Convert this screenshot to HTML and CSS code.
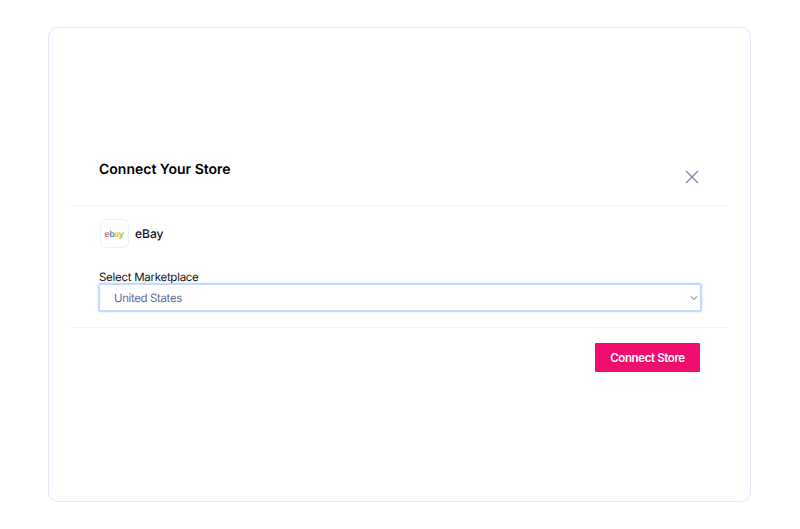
FILE: index.html
```html
<!DOCTYPE html>
<html lang="en">
<head>
    <meta charset="UTF-8">
    <meta name="viewport" content="width=device-width, initial-scale=1.0">
    <title>Connect Your Store</title>

    <link rel="stylesheet" href="styles.css">
</head>
<body>

    <div class="card">
        <div class="modal">
            <div class="modal-header">
                <h2>Connect Your Store</h2>
                <svg class="close" width="14" height="14" viewBox="0 0 14 14">
                    <path d="M1 1L13 13M13 1L1 13" stroke="#7d86a6" stroke-width="1.2" fill="none" />
                </svg>
            </div>

            <div class="modal-body">
                <div class="store">
                    <div class="logo"><span class="e">e</span><span class="b">b</span><span class="a">a</span><span class="y">y</span></div>
                    <div class="store-name">eBay</div>
                </div>

                <label>Select Marketplace</label>
                <div class="select">
                    <span>United States</span>
                    <svg width="8" height="6" viewBox="0 0 8 6">
                        <path d="M1 1.5L4 4.5L7 1.5" stroke="#9aa1b8" stroke-width="1.1" fill="none" />
                    </svg>
                </div>
            </div>

            <div class="modal-footer">
                <button>Connect Store</button>
            </div>
        </div>
    </div>

</body>
</html>
```

FILE: styles.css
```css
* {
    margin: 0;
    padding: 0;
    box-sizing: border-box;
}

body {
    height: 529px;
    padding: 27px 49px 27px 48px;
    background: #fff;
    font-family: Inter, "Liberation Sans", sans-serif;
    text-rendering: geometricPrecision;
    overflow: hidden;
}

.card {
    height: 475px;
    padding: 0 22px;
    border: 1px solid #e6e8f8;
    border-radius: 10px;
    display: flex;
    flex-direction: column;
    justify-content: center;
}

.modal-header {
    height: 49px;
    padding: 4px 29px 0 28px;
    border-bottom: 1px solid #f2f3f9;
    display: flex;
    justify-content: space-between;
}

h2 {
    font-size: 14px;
    font-weight: 600;
    line-height: 18px;
    color: #000;
}

.close {
    margin-top: 9px;
}

.modal-body {
    padding: 13px 26px 15px 27px;
    border-bottom: 1px solid #f2f3f9;
}

.store {
    display: flex;
    align-items: center;
    gap: 6px;
    margin-bottom: 21px;
    margin-left: 2px;
}

.logo {
    width: 29px;
    height: 29px;
    padding-right: 1px;
    border: 1px solid #eff0f8;
    border-radius: 6px;
    display: flex;
    align-items: center;
    justify-content: center;
    font-family: "Liberation Sans", sans-serif;
    font-size: 9px;
    font-weight: 700;
    letter-spacing: -0.4px;
}

.e { color: #e8636a; }
.b { color: #4a8fdc; }
.a { color: #f3c244; }
.y { color: #a0c64e; }

.store-name {
    font-size: 12px;
    font-weight: 500;
    color: #14141e;
}

label {
    display: block;
    margin-left: 1px;
    padding-top: 1px;
    font-size: 11.5px;
    line-height: 14px;
    letter-spacing: -0.28px;
    color: #14141e;
}

.select {
    height: 29px;
    margin-top: -1px;
    padding: 1px 2px 0 14px;
    border: 2px solid #c3dafe;
    border-radius: 3px;
    box-shadow: 0 0 2px #c3dafe;
    display: flex;
    align-items: center;
    justify-content: space-between;
    font-size: 11.5px;
    letter-spacing: -0.38px;
    color: #656d96;
}

.modal-footer {
    padding: 15px 28px 0 0;
    display: flex;
    justify-content: flex-end;
}

button {
    width: 105px;
    height: 29px;
    padding-top: 1px;
    border: none;
    border-radius: 1px;
    background: #f00d6e;
    color: #fff;
    font-family: Inter, "Liberation Sans", sans-serif;
    font-size: 11.5px;
    font-weight: 600;
    letter-spacing: -0.38px;
}
```
